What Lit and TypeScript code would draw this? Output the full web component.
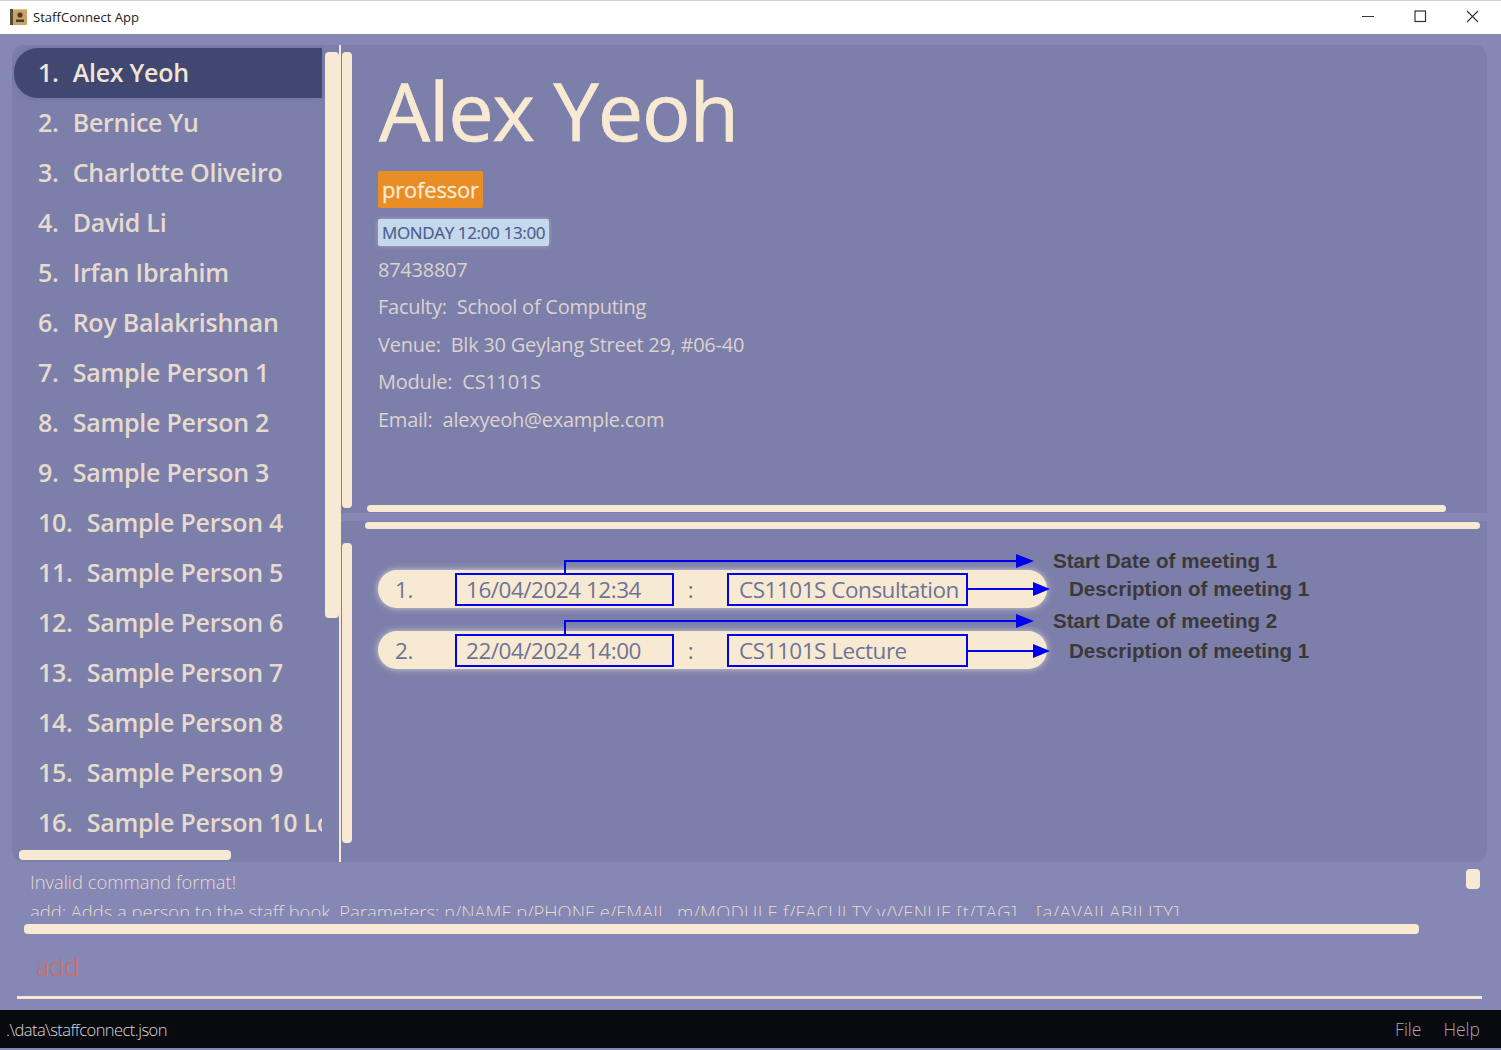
import { LitElement, html, css, svg } from 'lit';
import { customElement } from 'lit/decorators.js';

const PEOPLE = [
  'Alex Yeoh',
  'Bernice Yu',
  'Charlotte Oliveiro',
  'David Li',
  'Irfan Ibrahim',
  'Roy Balakrishnan',
  'Sample Person 1',
  'Sample Person 2',
  'Sample Person 3',
  'Sample Person 4',
  'Sample Person 5',
  'Sample Person 6',
  'Sample Person 7',
  'Sample Person 8',
  'Sample Person 9',
  'Sample Person 10 Long Name',
];

const MEETINGS = [
  { start: '16/04/2024 12:34', description: 'CS1101S Consultation' },
  { start: '22/04/2024 14:00', description: 'CS1101S Lecture' },
];

const NOTES = [
  { text: 'Start Date of meeting 1', x: 712, y: 29 },
  { text: 'Description of meeting 1', x: 728, y: 57 },
  { text: 'Start Date of meeting 2', x: 712, y: 89 },
  { text: 'Description of meeting 1', x: 728, y: 119 },
];

const arrow = (d: string, tipX: number, tipY: number, len: number) => svg`
  <path d=${d} fill="none" stroke="#0000f0" stroke-width="2" />
  <path d="M${tipX - len} ${tipY - 7}L${tipX} ${tipY}L${tipX - len} ${tipY + 7}Z" fill="#0000f0" />
`;

@customElement('app-root')
export class AppRoot extends LitElement {
  static styles = css`
    :host {
      display: flex;
      flex-direction: column;
      width: 1501px;
      height: 1050px;
      overflow: hidden;
      background: #8587b4;
      font-family: 'Open Sans', 'Noto Sans', sans-serif;
      color: #e6dbcd;
    }

    /* === Title bar === */
    .titlebar {
      flex: none;
      height: 34px;
      box-sizing: border-box;
      display: flex;
      align-items: center;
      background: #fff;
      border-top: 1px solid #d4d4de;
      padding: 0 2px 2px 10px;
      color: #222;
      font-size: 13.1px;
    }

    .app-icon {
      margin-right: 6px;
    }

    .win-buttons {
      margin-left: auto;
      margin-bottom: 2px;
      display: flex;
    }

    .win-buttons svg {
      display: block;
      width: 52px;
      height: 30px;
    }

    /* === Main split === */
    .main {
      flex: none;
      height: 817px;
      margin-top: 11px;
      display: flex;
      padding-left: 12px;
      padding-right: 13px;
    }

    .people {
      position: relative;
      flex: none;
      width: 327px;
      background: #7d7fab;
      border-radius: 12px 0 0 12px;
      padding: 3px 17px 0 2px;
      box-sizing: border-box;
      overflow: hidden;
    }

    .person {
      height: 50px;
      display: flex;
      align-items: center;
      padding: 0 0 3px 24px;
      box-sizing: border-box;
      white-space: nowrap;
      overflow: hidden;
      font-size: 25px;
      font-weight: 600;
      letter-spacing: -0.25px;
      color: #e6dbcd;
    }

    .person.selected {
      background: #404871;
      border-radius: 24px 0 0 24px;
      box-shadow: 0 0 6px #6f7199;
      color: #efe5d4;
    }

    .person .idx {
      margin-right: 14px;
    }

    .thumb {
      position: absolute;
      background: #f8ead2;
      border-radius: 4px;
    }

    .people .v {
      left: 313px;
      top: 7px;
      width: 14px;
      height: 566px;
    }

    .people .h {
      left: 7px;
      top: 805px;
      width: 212px;
      height: 10px;
    }

    .divider {
      flex: none;
      width: 2px;
      background: #f8ead2;
    }

    .right {
      flex: none;
      width: 1146px;
      display: flex;
      flex-direction: column;
      gap: 8px;
    }

    .details {
      position: relative;
      flex: none;
      height: 468px;
      background: #7d7fab;
      border-radius: 0 12px 0 0;
      padding: 20px 0 0 37px;
      box-sizing: border-box;
      display: flex;
      flex-direction: column;
      align-items: flex-start;
    }

    .details h1 {
      margin: 0 0 0 1px;
      font-size: 81px;
      line-height: 90px;
      font-weight: 400;
      letter-spacing: -1.2px;
      -webkit-text-stroke: 0.7px #f8ead2;
      color: #f8ead2;
    }

    .tag {
      margin-top: 16px;
      height: 37px;
      line-height: 37px;
      padding: 0 4px;
      background: #e98d26;
      border-radius: 2px;
      font-size: 22px;
      letter-spacing: -0.2px;
      -webkit-text-stroke: 0.3px #f8ead2;
      color: #f8ead2;
    }

    .slot {
      margin-top: 11px;
      height: 27px;
      line-height: 27px;
      padding: 0 4px;
      background: #c6d9ec;
      border-radius: 2px;
      font-size: 17px;
      letter-spacing: -0.35px;
      -webkit-text-stroke: 0.2px #4a5e8f;
      color: #4a5e8f;
      box-shadow: 0 0 4px #a5abc9;
    }

    .fields {
      margin-top: 4.5px;
      font-size: 20px;
      letter-spacing: -0.25px;
      line-height: 37.5px;
      color: #dcd2cf;
    }

    .fields span {
      margin-right: 10px;
    }

    .details .v {
      left: 1px;
      top: 7px;
      width: 10px;
      height: 456px;
    }

    .details .h {
      left: 26px;
      top: 460px;
      width: 1079px;
      height: 7px;
    }

    .meetings {
      position: relative;
      flex: 1;
      background: #7d7fab;
      border-radius: 0 0 12px 0;
      padding: 49px 0 0 37px;
    }

    .meetings .v {
      left: 1px;
      top: 22px;
      width: 10px;
      height: 300px;
    }

    .meetings .h {
      left: 24px;
      top: 1px;
      width: 1115px;
      height: 7px;
    }

    .meeting {
      width: 669px;
      height: 38px;
      margin-bottom: 23px;
      display: grid;
      grid-template-columns: 77px 219px 53px 241px;
      align-items: center;
      background: #f8ead2;
      border-radius: 19px;
      box-shadow: 0 0 6px #d6d2d2;
      font-size: 22.5px;
      letter-spacing: -0.48px;
      color: #6d7398;
    }

    .meeting .no {
      padding-left: 17px;
    }

    .meeting .box {
      height: 33px;
      line-height: 30px;
      padding-left: 10px;
      box-sizing: border-box;
      border: 2px solid #0000f0;
      white-space: nowrap;
    }

    .meeting .box.date {
      padding-left: 9px;
    }

    .meeting .sep {
      text-align: center;
      padding-right: 20px;
    }

    .overlay {
      position: absolute;
      left: 0;
      top: 0;
      width: 1146px;
      height: 341px;
      pointer-events: none;
    }

    .note {
      position: absolute;
      transform: translateY(-50%);
      font-family: 'Liberation Sans', Arial, sans-serif;
      font-weight: 700;
      font-size: 20.6px;
      white-space: nowrap;
      color: #3b3838;
    }

    /* === Result box === */
    .result {
      position: relative;
      flex: none;
      height: 72px;
    }

    .result .text {
      position: absolute;
      left: 30px;
      top: 5px;
      width: 1420px;
      height: 49px;
      overflow: hidden;
      font-size: 18.4px;
      font-weight: 300;
      line-height: 30px;
      color: #e6dbcd;
      white-space: pre;
    }

    .result .wide {
      letter-spacing: 0.35px;
    }

    .result .wider {
      letter-spacing: 0.55px;
    }

    .result .v {
      left: 1466px;
      top: 7px;
      width: 14px;
      height: 20px;
    }

    .result .h {
      left: 24px;
      top: 62px;
      width: 1395px;
      height: 10px;
    }

    /* === Command box === */
    .command {
      flex: none;
      height: 65px;
      margin: 0 19px 0 17px;
      border-bottom: 3px solid #f8ead2;
      box-sizing: border-box;
      padding: 12px 0 0 19px;
      font-size: 25px;
      font-weight: 300;
      line-height: 40px;
      color: #d66a60;
    }

    /* === Status bar === */
    .status {
      flex: none;
      margin-top: 11px;
      height: 38px;
      display: flex;
      align-items: center;
      background: #090a0f;
      padding: 0 21px 0 6px;
      font-size: 16.5px;
      font-weight: 300;
      letter-spacing: -0.55px;
      color: #d8d8d8;
    }

    .status .menu {
      margin-left: auto;
      display: flex;
      gap: 22px;
      font-size: 17.5px;
      letter-spacing: 0;
      color: #a8a8ad;
    }
  `;

  render() {
    return html`
      <div class="titlebar">
        <svg class="app-icon" width="17" height="16" viewBox="0 0 17 16">
          <rect x="0" y="0" width="17" height="16" rx="1" fill="#c9a468" />
          <rect x="0" y="0" width="3" height="16" fill="#5b4a3a" />
          <rect x="3" y="0" width="14" height="1" fill="#e3c78f" />
          <circle cx="10" cy="6" r="2.6" fill="#4d3a22" />
          <path d="M6 10.5h8v2.5H6z" fill="#4d3a22" />
        </svg>
        StaffConnect App
        <div class="win-buttons">
          <svg viewBox="0 0 52 30"><path d="M19 15.5h12" stroke="#333" stroke-width="1" /></svg>
          <svg viewBox="0 0 52 30">
            <rect x="20" y="10" width="10.5" height="10.5" fill="none" stroke="#333" stroke-width="1.2" />
          </svg>
          <svg viewBox="0 0 52 30">
            <path d="M20 10l11 11M31 10L20 21" stroke="#333" stroke-width="1.1" fill="none" />
          </svg>
        </div>
      </div>

      <div class="main">
        <section class="people">
          ${PEOPLE.map(
            (name, i) => html`
              <div class="person ${i === 0 ? 'selected' : ''}">
                <span class="idx">${i + 1}.</span>${name}
              </div>
            `
          )}
          <div class="thumb v"></div>
          <div class="thumb h"></div>
        </section>
        <div class="divider"></div>
        <div class="right">
          <section class="details">
            <h1>Alex Yeoh</h1>
            <div class="tag">professor</div>
            <div class="slot">MONDAY 12:00 13:00</div>
            <div class="fields">
              <div>87438807</div>
              <div><span>Faculty:</span>School of Computing</div>
              <div><span>Venue:</span>Blk 30 Geylang Street 29, #06-40</div>
              <div><span>Module:</span>CS1101S</div>
              <div><span>Email:</span>alexyeoh@example.com</div>
            </div>
            <div class="thumb v"></div>
            <div class="thumb h"></div>
          </section>
          <section class="meetings">
            ${MEETINGS.map(
              (m, i) => html`
                <div class="meeting">
                  <div class="no">${i + 1}.</div>
                  <div class="box date">${m.start}</div>
                  <div class="sep">:</div>
                  <div class="box">${m.description}</div>
                </div>
              `
            )}
            <svg class="overlay" viewBox="0 0 1146 341">
              ${arrow('M224 53V40H680', 693, 40, 18)}
              ${arrow('M627 68H692', 709, 68, 17)}
              ${arrow('M224 113V100H680', 693, 100, 18)}
              ${arrow('M627 130H692', 709, 130, 17)}
            </svg>
            ${NOTES.map(
              n => html`<div class="note" style="left:${n.x}px;top:${n.y + 11}px">${n.text}</div>`
            )}
            <div class="thumb v"></div>
            <div class="thumb h"></div>
          </section>
        </div>
      </div>

      <div class="result">
        <div class="text">Invalid command format!
add: Adds a person to the staff book. Parameters: n/NAME p/PHONE e/EMAIL  <span class="wide">m/MODULE f/FACULTY v/VENUE [t/TAG]...</span> <span class="wider">[a/AVAILABILITY]</span></div>
        <div class="thumb v"></div>
        <div class="thumb h"></div>
      </div>

      <div class="command">add</div>

      <footer class="status">
        <span>.\\data\\staffconnect.json</span>
        <div class="menu"><span>File</span><span>Help</span></div>
      </footer>
    `;
  }
}
